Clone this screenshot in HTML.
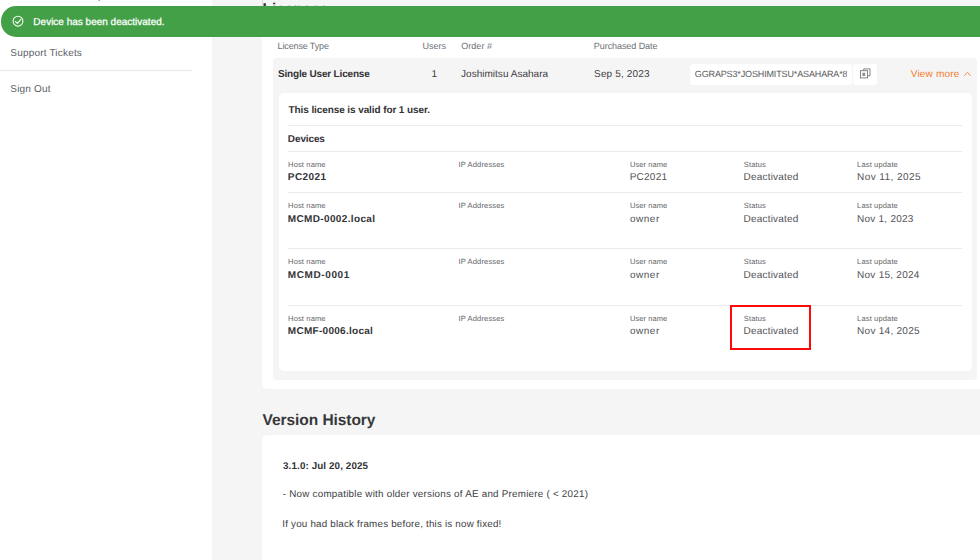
<!DOCTYPE html>
<html lang="en">
<head>
<meta charset="utf-8">
<title>Licenses</title>
<style>
*{box-sizing:border-box;margin:0;padding:0}
html,body{width:980px;height:560px;overflow:hidden;background:#f5f5f5}
body{position:relative;font-family:"Liberation Sans",sans-serif;color:#3a3a3a;text-rendering:geometricPrecision}
.t{position:absolute;white-space:nowrap;line-height:1}
.bx{position:absolute}
#sidebar{left:0;top:0;width:212px;height:560px;background:#fff}
#sep{left:0;top:70px;width:192px;height:1px;background:#e8e8e8}
#toast{left:0.5px;top:6.2px;width:990px;height:30.4px;background:#43a047;border-radius:15px 0 0 15px}
#card1{left:262px;top:22px;width:740px;height:367.4px;background:#fff;border-radius:5px}
#row{left:273px;top:57.5px;width:704px;height:322px;background:#f5f5f5;border-radius:4px}
#inner{left:278.5px;top:93.3px;width:693.5px;height:278.1px;background:#fff;border-radius:5px}
.hl{position:absolute;left:288px;width:674px;height:1px;background:#ebebeb}
#key{left:690px;top:63.5px;width:161.5px;height:21px;background:#fff;border-radius:3px}
#keyclip{left:694px;top:63.5px;width:153.2px;height:21px;overflow:hidden}
#copy{left:853px;top:63.5px;width:24px;height:21px;background:#fff;border-radius:3px}
#red{left:730px;top:305px;width:81px;height:45px;border:2px solid #ff0a0a}
#card2{left:262px;top:435px;width:740px;height:160px;background:#fff;border-radius:5px}
</style>
</head>
<body>
<div class="bx" id="sidebar"></div>
<div class="t" style="left:11.5px;top:-8px;font-size:10px;color:#5a5e66;letter-spacing:0.27px">Downloads &amp; Setup</div>

<div class="t" style="left:10.30px;top:49px;font-size:10px;color:#5a5e66;letter-spacing:0.189px;">Support Tickets</div>
<div class="bx" id="sep"></div>
<div class="t" style="left:10.30px;top:85px;font-size:10px;color:#5a5e66;letter-spacing:0.200px;">Sign Out</div>
<div class="t" style="left:262.5px;top:2px;font-size:15.5px;font-weight:bold;color:#333336;letter-spacing:-0.06px">Licenses</div>
<div class="bx" style="left:262px;top:0;width:1px;height:7px;background:#dcd6da"></div>
<div class="bx" id="card1"></div>
<div class="t" style="left:277.55px;top:42px;font-size:9px;color:#6c7077;letter-spacing:-0.132px;">License Type</div>
<div class="t" style="left:422.45px;top:42px;font-size:9px;color:#6c7077;letter-spacing:0.012px;">Users</div>
<div class="t" style="left:461.20px;top:42px;font-size:9px;color:#6c7077;letter-spacing:0.058px;">Order #</div>
<div class="t" style="left:593.85px;top:42px;font-size:9px;color:#6c7077;letter-spacing:-0.073px;">Purchased Date</div>
<div class="bx" id="row"></div>
<div class="t" style="left:278.05px;top:70px;font-size:10px;color:#333336;font-weight:bold;letter-spacing:-0.186px;">Single User License</div>
<div class="t" style="left:431.55px;top:70px;font-size:10px;color:#3d3d3f;">1</div>
<div class="t" style="left:461.05px;top:70px;font-size:10px;color:#3d3d3f;letter-spacing:0.018px;">Joshimitsu Asahara</div>
<div class="t" style="left:594.10px;top:70px;font-size:10px;color:#3d3d3f;letter-spacing:0.145px;">Sep 5, 2023</div>
<div class="bx" id="key"></div>
<div class="bx" id="keyclip"><div class="t" style="left:0.80px;top:6.50px;font-size:9px;color:#58585b;letter-spacing:-0.139px">GGRAPS3*JOSHIMITSU*ASAHARA*8</div></div>
<div class="bx" id="copy"><svg width="24" height="21" viewBox="0 0 24 21" fill="none" stroke="#6e6e70" stroke-width="0.85">
<path d="M10.7 6.5V4.9h6.3v6.9h-2.2"/>
<rect x="7.4" y="6.700" width="7.200" height="7.200" fill="#fff"/>
<rect x="9.4" y="8.800" width="2.800" height="3.200" fill="#8d8d8f" stroke="none"/>
</svg></div>
<div class="t" style="left:910.70px;top:70px;font-size:10px;color:#f47b2c;letter-spacing:0.206px;">View more</div>
<svg class="bx" style="left:963px;top:70px" width="9" height="7" viewBox="0 0 9 7" fill="none" stroke="#f58a45" stroke-width="0.9" stroke-linecap="round" stroke-linejoin="round"><path d="M1.500 5.600L4.400 2.200l2.900 3.400"/></svg>
<div class="bx" id="inner"></div>
<div class="t" style="left:288.60px;top:106px;font-size:10px;color:#333336;font-weight:bold;letter-spacing:-0.098px;">This license is valid for 1 user.</div>
<div class="hl" style="top:124.800px"></div>
<div class="t" style="left:287.85px;top:135px;font-size:10px;color:#333336;font-weight:bold;letter-spacing:-0.125px;">Devices</div>
<div class="hl" style="top:150.7px"></div>
<div class="t" style="left:288.10px;top:161px;font-size:7.5px;color:#646468;letter-spacing:0.144px;">Host name</div>
<div class="t" style="left:458.45px;top:161px;font-size:7.5px;color:#646468;letter-spacing:0.164px;">IP Addresses</div>
<div class="t" style="left:629.90px;top:161px;font-size:7.5px;color:#646468;letter-spacing:0.069px;">User name</div>
<div class="t" style="left:743.85px;top:161px;font-size:7.5px;color:#646468;letter-spacing:0.150px;">Status</div>
<div class="t" style="left:857.10px;top:161px;font-size:7.5px;color:#646468;letter-spacing:0.150px;">Last update</div>
<div class="t" style="left:287.85px;top:173px;font-size:10px;color:#333336;font-weight:bold;letter-spacing:0.420px;">PC2021</div>
<div class="t" style="left:629.65px;top:173px;font-size:10px;color:#525256;letter-spacing:0.260px;">PC2021</div>
<div class="t" style="left:743.55px;top:173px;font-size:10px;color:#525256;letter-spacing:0.205px;">Deactivated</div>
<div class="t" style="left:857.05px;top:173px;font-size:10px;color:#525256;letter-spacing:0.436px;">Nov 11, 2025</div>
<div class="hl" style="top:192.0px"></div>
<div class="t" style="left:288.10px;top:202px;font-size:7.5px;color:#646468;letter-spacing:0.144px;">Host name</div>
<div class="t" style="left:458.45px;top:202px;font-size:7.5px;color:#646468;letter-spacing:0.164px;">IP Addresses</div>
<div class="t" style="left:629.90px;top:202px;font-size:7.5px;color:#646468;letter-spacing:0.069px;">User name</div>
<div class="t" style="left:743.85px;top:202px;font-size:7.5px;color:#646468;letter-spacing:0.150px;">Status</div>
<div class="t" style="left:857.10px;top:202px;font-size:7.5px;color:#646468;letter-spacing:0.150px;">Last update</div>
<div class="t" style="left:287.85px;top:215px;font-size:10px;color:#333336;font-weight:bold;letter-spacing:0.350px;">MCMD-0002.local</div>
<div class="t" style="left:629.90px;top:215px;font-size:10px;color:#525256;letter-spacing:0.537px;">owner</div>
<div class="t" style="left:743.55px;top:215px;font-size:10px;color:#525256;letter-spacing:0.205px;">Deactivated</div>
<div class="t" style="left:857.05px;top:215px;font-size:10px;color:#525256;letter-spacing:0.240px;">Nov 1, 2023</div>
<div class="hl" style="top:248.1px"></div>
<div class="t" style="left:288.10px;top:258px;font-size:7.5px;color:#646468;letter-spacing:0.144px;">Host name</div>
<div class="t" style="left:458.45px;top:258px;font-size:7.5px;color:#646468;letter-spacing:0.164px;">IP Addresses</div>
<div class="t" style="left:629.90px;top:258px;font-size:7.5px;color:#646468;letter-spacing:0.069px;">User name</div>
<div class="t" style="left:743.85px;top:258px;font-size:7.5px;color:#646468;letter-spacing:0.150px;">Status</div>
<div class="t" style="left:857.10px;top:258px;font-size:7.5px;color:#646468;letter-spacing:0.150px;">Last update</div>
<div class="t" style="left:287.85px;top:271px;font-size:10px;color:#333336;font-weight:bold;letter-spacing:0.594px;">MCMD-0001</div>
<div class="t" style="left:629.90px;top:271px;font-size:10px;color:#525256;letter-spacing:0.537px;">owner</div>
<div class="t" style="left:743.55px;top:271px;font-size:10px;color:#525256;letter-spacing:0.205px;">Deactivated</div>
<div class="t" style="left:857.05px;top:271px;font-size:10px;color:#525256;letter-spacing:0.255px;">Nov 15, 2024</div>
<div class="hl" style="top:304.7px"></div>
<div class="t" style="left:288.10px;top:315px;font-size:7.5px;color:#646468;letter-spacing:0.144px;">Host name</div>
<div class="t" style="left:458.45px;top:315px;font-size:7.5px;color:#646468;letter-spacing:0.164px;">IP Addresses</div>
<div class="t" style="left:629.90px;top:315px;font-size:7.5px;color:#646468;letter-spacing:0.069px;">User name</div>
<div class="t" style="left:743.85px;top:315px;font-size:7.5px;color:#646468;letter-spacing:0.150px;">Status</div>
<div class="t" style="left:857.10px;top:315px;font-size:7.5px;color:#646468;letter-spacing:0.150px;">Last update</div>
<div class="t" style="left:287.85px;top:327px;font-size:10px;color:#333336;font-weight:bold;letter-spacing:0.279px;">MCMF-0006.local</div>
<div class="t" style="left:629.90px;top:327px;font-size:10px;color:#525256;letter-spacing:0.537px;">owner</div>
<div class="t" style="left:743.55px;top:327px;font-size:10px;color:#525256;letter-spacing:0.205px;">Deactivated</div>
<div class="t" style="left:857.05px;top:327px;font-size:10px;color:#525256;letter-spacing:0.277px;">Nov 14, 2025</div>
<div class="bx" id="red"></div>
<div class="t" style="left:262.55px;top:413px;font-size:15.5px;color:#37373a;font-weight:bold;letter-spacing:-0.057px;">Version History</div>
<div class="bx" id="card2"></div>
<div class="t" style="left:283.05px;top:462px;font-size:9.8px;color:#333336;font-weight:bold;letter-spacing:0.122px;">3.1.0: Jul 20, 2025</div>
<div class="t" style="left:282.80px;top:490px;font-size:9.8px;color:#3d3d3f;letter-spacing:0.245px;">- Now compatible with older versions of AE and Premiere ( &lt; 2021)</div>
<div class="t" style="left:282.30px;top:520px;font-size:9.8px;color:#3d3d3f;letter-spacing:0.202px;">If you had black frames before, this is now fixed!</div>
<div class="bx" id="toast"></div>
<svg class="bx" style="left:10.5px;top:14.1px" width="14" height="14" viewBox="0 0 14 14" fill="none" stroke="#f4fbf4" stroke-width="1.1" stroke-linecap="round" stroke-linejoin="round"><circle cx="7" cy="7.200" r="4.900"/><path d="M4.500 7.500l1.900 1.900 3.400-4"/></svg>
<div class="t" style="left:33.35px;top:18px;font-size:10px;color:#ffffff;-webkit-text-stroke:0.25px #fff;">Device has been deactivated.</div>
</body>
</html>
